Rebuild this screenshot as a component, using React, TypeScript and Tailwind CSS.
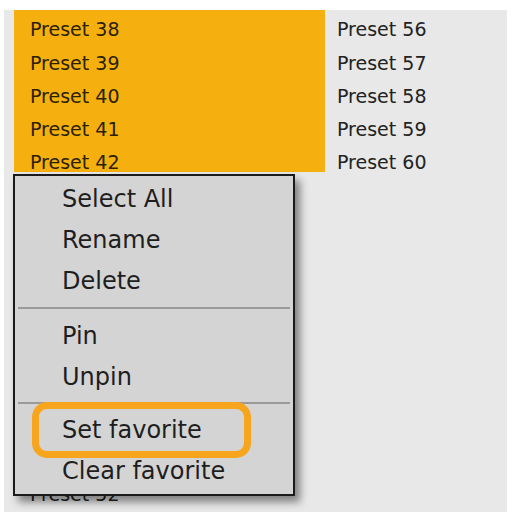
import React from "react";

const selectedItems = [38, 39, 40, 41, 42];
const restItems = Array.from({ length: 10 }, (_, i) => 43 + i);
const rightItems = [56, 57, 58, 59, 60];

function MenuItem({ label }: { label: string }) {
  return (
    <div className="h-[41px] flex items-center pl-[47px] text-[24px] text-[#1e1e1e]">
      {label}
    </div>
  );
}

function Separator({ top, bottom }: { top: string; bottom: string }) {
  return <div className={`${top} ${bottom} mx-[3px] h-[2px] bg-[#9a9a9a]`} />;
}

export default function App() {
  return (
    <div
      className="w-[512px] h-[512px] bg-white overflow-hidden"
      style={{ fontFamily: '"DejaVu Sans", Verdana, sans-serif' }}
    >
      <div className="relative ml-[4px] mr-[5px] mt-[10px] h-[502px] bg-[#e8e8e8]">
        <div className="flex">
          <div className="ml-[10px] w-[311px] flex flex-col">
            <div className="h-[162px] bg-[#f5b00f] flex flex-col">
              {selectedItems.map((n) => (
                <div
                  key={n}
                  className="h-[33.2px] shrink-0 flex items-center pt-[6px] pl-[16px] text-[19px] text-[#2a2100]"
                >
                  Preset {n}
                </div>
              ))}
            </div>
            <div className="mt-[4px] flex flex-col">
              {restItems.map((n) => (
                <div
                  key={n}
                  className={`h-[33.2px] flex items-center pt-[6px] pl-[16px] text-[19px] text-[#222] ${
                    n < 52 ? "invisible" : ""
                  }`}
                >
                  Preset {n}
                </div>
              ))}
            </div>
          </div>
          <div className="flex flex-col">
            {rightItems.map((n) => (
              <div
                key={n}
                className="h-[33.2px] flex items-center pt-[6px] pl-[12px] text-[19px] text-[#222]"
              >
                Preset {n}
              </div>
            ))}
          </div>
        </div>

        <div className="absolute left-[9px] top-[164px] w-[282px] border-2 border-[#1a1a1a] bg-[#d4d4d4] pt-[2px] pb-[3px] shadow-[5px_6px_8px_rgba(0,0,0,0.45)]">
          <MenuItem label="Select All" />
          <MenuItem label="Rename" />
          <MenuItem label="Delete" />
          <Separator top="mt-[6px]" bottom="mb-[6px]" />
          <MenuItem label="Pin" />
          <MenuItem label="Unpin" />
          <Separator top="mt-[5px]" bottom="mb-[5px]" />
          <div className="relative">
            <MenuItem label="Set favorite" />
            <div className="absolute left-[17px] top-[-7px] w-[219px] h-[56px] rounded-[15px] border-[7px] border-[#f7a51c]" />
          </div>
          <MenuItem label="Clear favorite" />
        </div>
      </div>
    </div>
  );
}
